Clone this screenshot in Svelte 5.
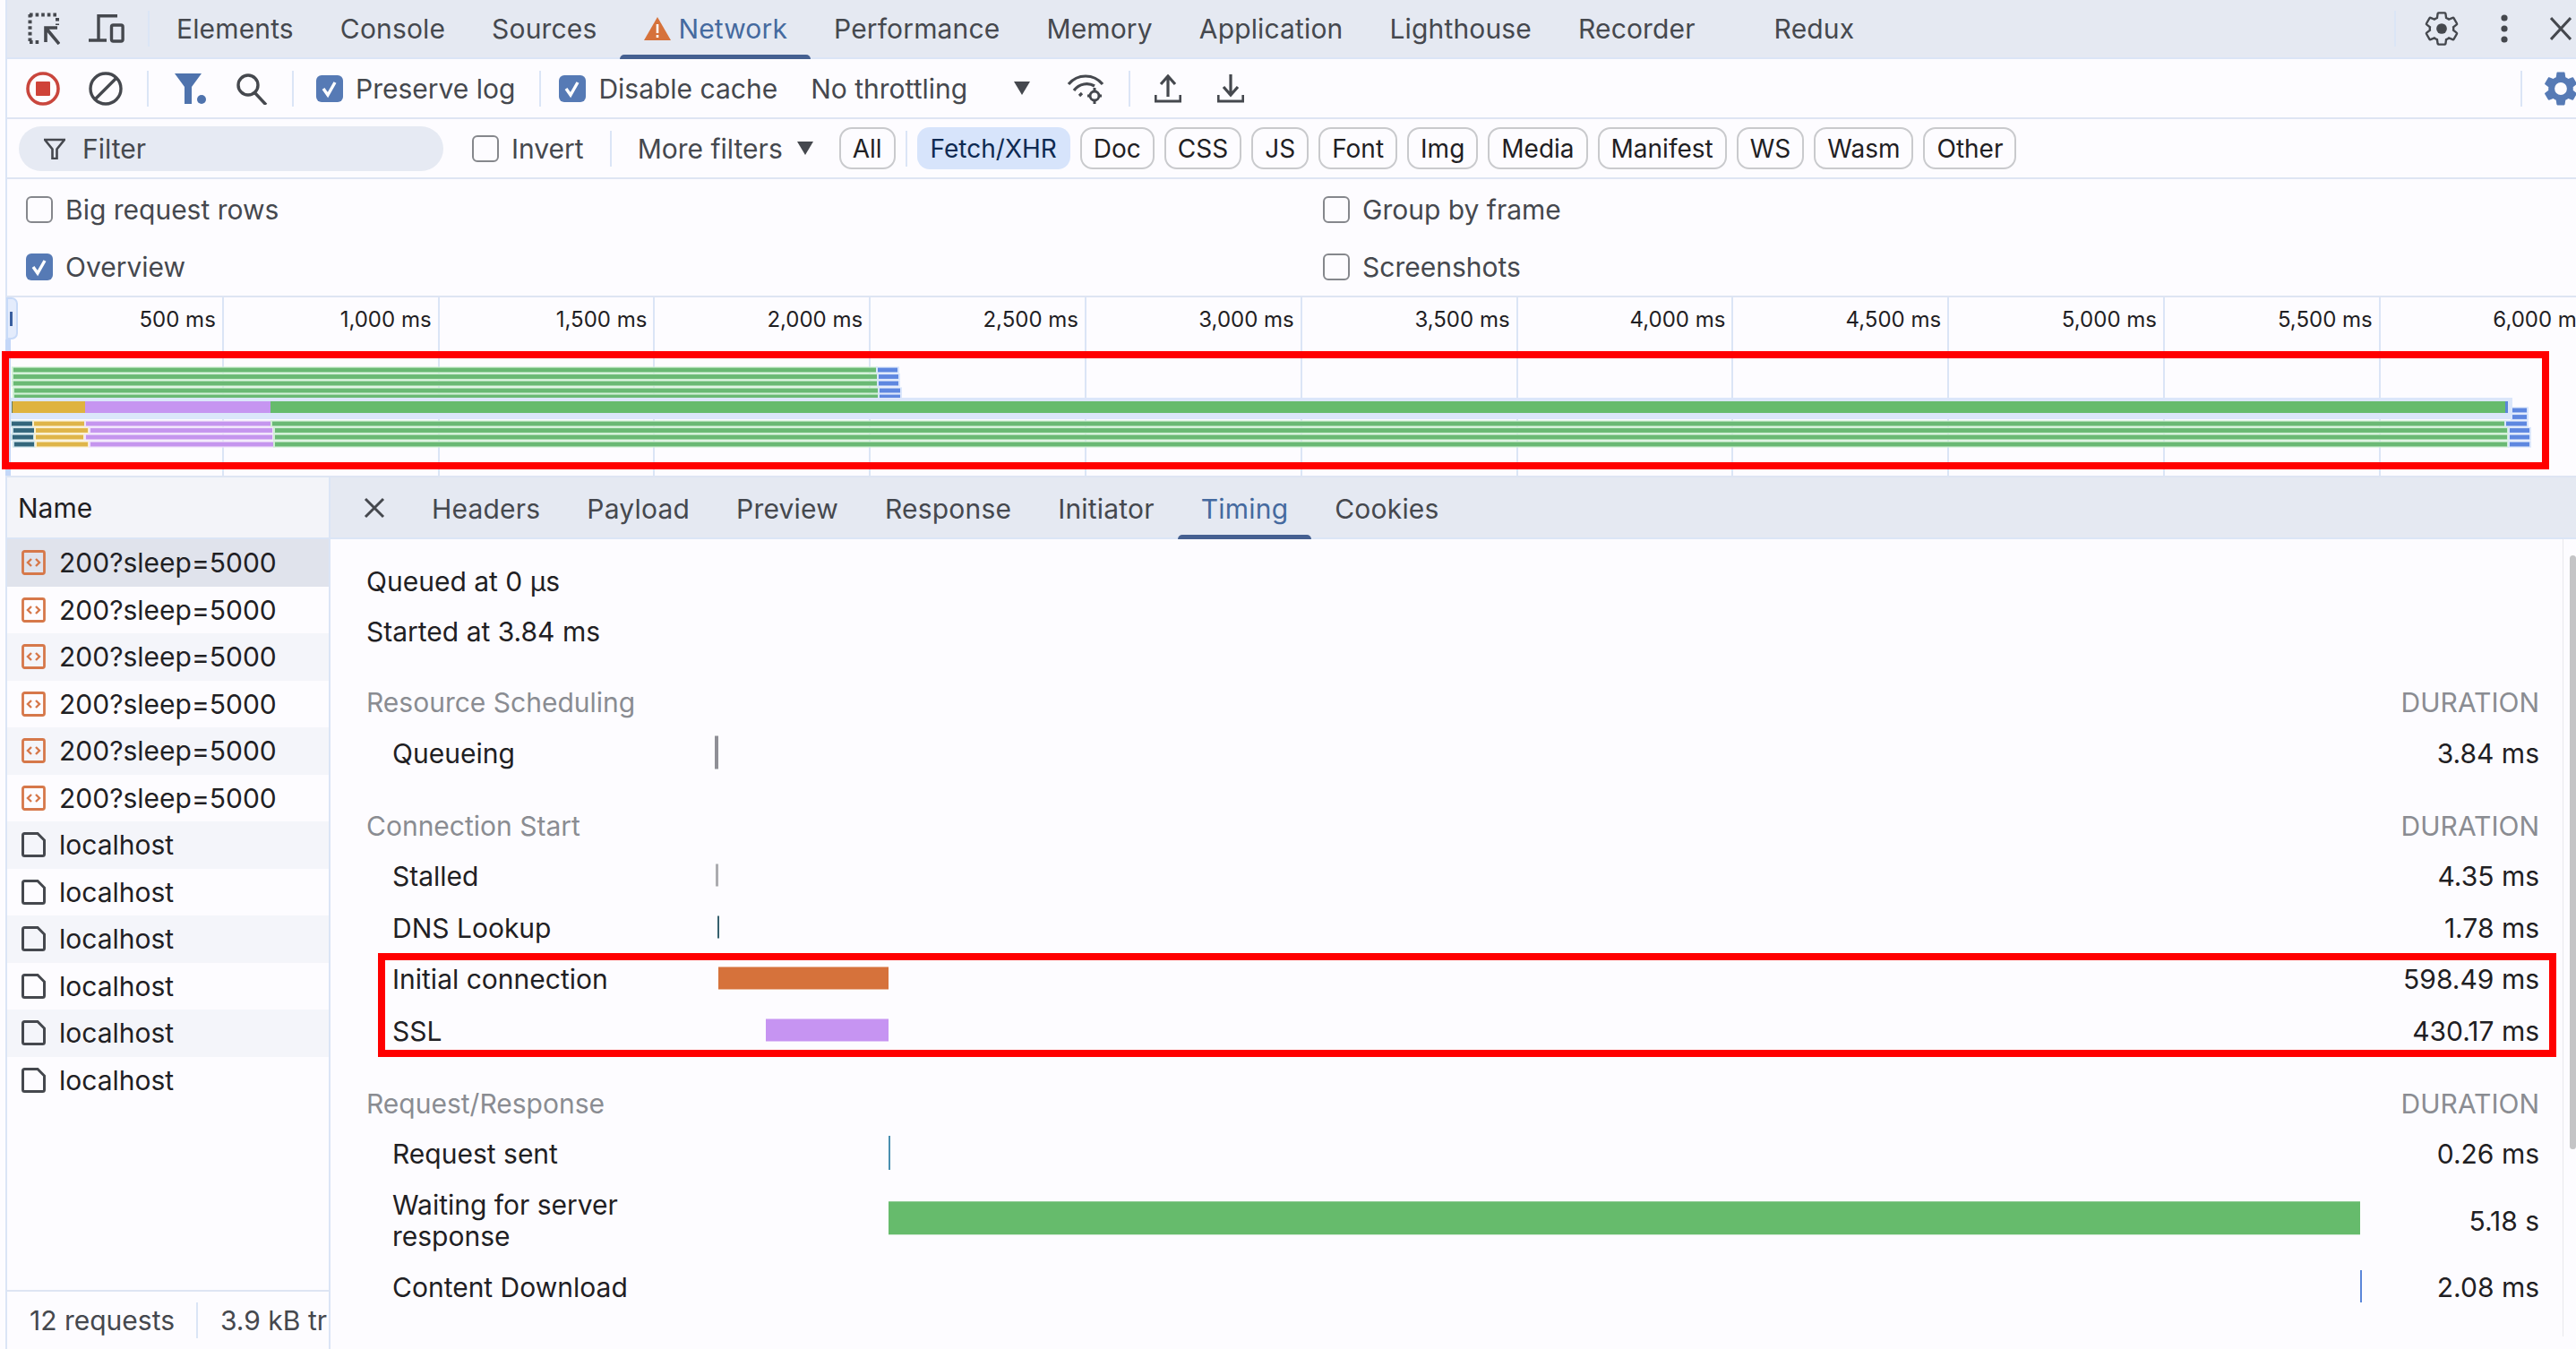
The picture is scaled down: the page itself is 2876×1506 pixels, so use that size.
<script>
const tabs = ['Elements', 'Console', 'Sources', 'Network', 'Performance', 'Memory', 'Application', 'Lighthouse', 'Recorder', 'Redux'];
const chips = ['Fetch/XHR', 'Doc', 'CSS', 'JS', 'Font', 'Img', 'Media', 'Manifest', 'WS', 'Wasm', 'Other'];
const detailTabs = ['Headers', 'Payload', 'Preview', 'Response', 'Initiator', 'Timing', 'Cookies'];
const ticks = ['500 ms', '1,000 ms', '1,500 ms', '2,000 ms', '2,500 ms', '3,000 ms', '3,500 ms', '4,000 ms', '4,500 ms', '5,000 ms', '5,500 ms', '6,000 ms'];
const requests = [...Array(6).fill('200?sleep=5000'), ...Array(6).fill('localhost')];

const colors = {
  g: ['#6ab974', '#cdeed2'],
  b: ['#5e87e0', '#d9e5fb'],
  y: ['#dfb549', '#fbefcc'],
  p: ['#c595ee', '#efe1fb'],
  t: ['#33667c', '#c9e0e8']
};

// overview rows: y centre, then segments [kind, from, to]
const shortRows = [
  [413, [['g', 15, 978], ['b', 980, 1002]]],
  [420.5, [['g', 15, 979], ['b', 981, 1003]]],
  [428, [['g', 15, 979], ['b', 981, 1003]]],
  [436, [['g', 16, 980], ['b', 982, 1005]]],
  [443, [['g', 16, 980], ['b', 982, 1005]]]
];
const longRows = [
  [458, [['b', 2805, 2821]]],
  [465.5, [['b', 2805, 2821]]],
  [473, [['t', 13, 36], ['y', 38, 94], ['p', 96, 302], ['g', 304, 2796], ['b', 2798, 2821]]],
  [480.5, [['t', 15, 38], ['y', 40, 98], ['p', 101, 304], ['g', 307, 2799], ['b', 2802, 2824]]],
  [488, [['t', 14, 37], ['y', 40, 93], ['p', 96, 304], ['g', 307, 2799], ['b', 2802, 2824]]],
  [496, [['t', 16, 38], ['y', 41, 98], ['p', 101, 305], ['g', 307, 2799], ['b', 2802, 2824]]]
];

const sections = [
  {
    title: 'Resource Scheduling',
    rows: [{ label: 'Queueing', value: '3.84 ms', x: 798, w: 4, h: 37, color: '#8f8f96' }]
  },
  {
    title: 'Connection Start',
    rows: [
      { label: 'Stalled', value: '4.35 ms', x: 799, w: 3, h: 25, color: '#ababaf' },
      { label: 'DNS Lookup', value: '1.78 ms', x: 801, w: 2, h: 25, color: '#36606e' },
      { label: 'Initial connection', value: '598.49 ms', x: 802, w: 190, h: 25, color: '#d6723b' },
      { label: 'SSL', value: '430.17 ms', x: 855, w: 137, h: 25, color: '#c694f2' }
    ]
  },
  {
    title: 'Request/Response',
    rows: [
      { label: 'Request sent', value: '0.26 ms', x: 992, w: 2, h: 38, color: '#4a8fb0' },
      { label: 'Waiting for server response', value: '5.18 s', x: 992, w: 1643, h: 37, color: '#66bb6c', tall: true },
      { label: 'Content Download', value: '2.08 ms', x: 2635, w: 2, h: 36, color: '#5b86d9' }
    ]
  }
];

const gearPath = 'M19.14 12.94c.04-.3.06-.61.06-.94 0-.32-.02-.64-.07-.94l2.03-1.58a.49.49 0 0 0 .12-.61l-1.92-3.32a.488.488 0 0 0-.59-.22l-2.39.96c-.5-.38-1.03-.7-1.62-.94l-.36-2.54a.484.484 0 0 0-.48-.41h-3.84c-.24 0-.43.17-.47.41l-.36 2.54c-.59.24-1.13.57-1.62.94l-2.39-.96c-.22-.08-.47 0-.59.22L2.74 8.87c-.12.21-.08.47.12.61l2.03 1.58c-.05.3-.09.63-.09.94s.02.64.07.94l-2.03 1.58a.49.49 0 0 0-.12.61l1.92 3.32c.12.22.37.29.59.22l2.39-.96c.5.38 1.03.7 1.62.94l.36 2.54c.05.24.24.41.48.41h3.84c.24 0 .44-.17.47-.41l.36-2.54c.59-.24 1.13-.56 1.62-.94l2.39.96c.22.08.47 0 .59-.22l1.92-3.32c.12-.22.07-.47-.12-.61l-2.01-1.58z';
</script>

{#snippet checkbox(on)}
  {#if on}
    <span class="box on">
      <svg viewBox="0 0 30 30" width="30" height="30"><path d="M8 15l5 7 8-14" fill="none" stroke="#fff" stroke-width="3.4"/></svg>
    </span>
  {:else}
    <span class="box"></span>
  {/if}
{/snippet}

{#snippet bars(rows)}
  {#each rows as [y, segs]}
    {#each segs as [kind, from, to]}
      <rect x={from - 2} y={y - 3.6} width={to - from + 4} height="7.2" fill={colors[kind][1]} />
      <rect x={from} y={y - 2.4} width={to - from} height="4.8" fill={colors[kind][0]} />
    {/each}
  {/each}
{/snippet}

<div class="app">
  <div class="shell">
    <!-- devtools panel tabs -->
    <header class="tabbar">
      <svg class="ic-inspect" viewBox="0 0 36 36" width="36" height="36" fill="none" stroke="#45484e">
        <path d="M2 2.5H34M2.5 2V32" stroke-width="4" stroke-dasharray="3.6 3"/>
        <path d="M33 6V14M2 33H13" stroke-width="4" stroke-dasharray="3.6 3"/>
        <path d="M20 33V17H33M20 17L35 35" stroke-width="3.6"/>
      </svg>
      <svg class="ic-device" viewBox="0 0 40 32" width="40" height="32" fill="none" stroke="#45484e" stroke-width="3.4">
        <path d="M32 1.7H11V29H0M0 29H20"/>
        <rect x="25.5" y="12" width="12.6" height="18" rx="2"/>
      </svg>
      <span class="vr"></span>
      <nav class="tablist">
        {#each tabs as tab}
          <span class="tab" class:active={tab === 'Network'} class:gap={tab === 'Recorder'}>
            {#if tab === 'Network'}
              <svg viewBox="0 0 32 28" width="32" height="28">
                <path d="M16 1L31 27H1z" fill="#d6723b"/>
                <path d="M16 9v10M16 21v3" stroke="#fff" stroke-width="2.6"/>
              </svg>
            {/if}
            {tab}
          </span>
        {/each}
      </nav>
      <div class="tabbar-right">
        <span class="vr"></span>
        <svg class="ic-gear" viewBox="0 0 24 24" width="44" height="44">
          <path d={gearPath} fill="none" stroke="#45484e" stroke-width="1.3"/>
          <circle cx="12" cy="12" r="3.2" fill="#45484e"/>
        </svg>
        <svg class="ic-dots" viewBox="0 0 10 32" width="10" height="32" fill="#45484e">
          <circle cx="5" cy="4" r="3.6"/><circle cx="5" cy="16" r="3.6"/><circle cx="5" cy="28" r="3.6"/>
        </svg>
        <svg class="ic-close" viewBox="0 0 24 26" width="24" height="26" fill="none" stroke="#45484e" stroke-width="3">
          <path d="M1 1L23 25M23 1L1 25"/>
        </svg>
      </div>
    </header>

    <!-- network toolbar -->
    <div class="toolbar">
      <svg class="ic-record" viewBox="0 0 38 38" width="38" height="38">
        <circle cx="19" cy="19" r="17" fill="none" stroke="#c9463d" stroke-width="3.6"/>
        <rect x="11" y="11" width="16" height="16" rx="1" fill="#cf4339"/>
      </svg>
      <svg class="ic-clear" viewBox="0 0 38 38" width="38" height="38" fill="none" stroke="#45484e" stroke-width="3.4">
        <circle cx="19" cy="19" r="17"/><path d="M7 31L31 7"/>
      </svg>
      <span class="vr"></span>
      <svg class="ic-filter" viewBox="0 0 36 34" width="36" height="34" fill="#4f73ad">
        <path d="M0 0H30L19 15V34H11V15z"/><circle cx="30" cy="29" r="5"/>
      </svg>
      <svg class="ic-search" viewBox="0 0 36 36" width="36" height="36" fill="none" stroke="#45484e" stroke-width="3.4">
        <circle cx="14" cy="14" r="11"/><path d="M21 22L34 36"/>
      </svg>
      <span class="vr"></span>
      <label class="opt preserve">{@render checkbox(true)}Preserve log</label>
      <span class="vr"></span>
      <label class="opt cache">{@render checkbox(true)}Disable cache</label>
      <span class="throttle">No throttling</span>
      <span class="tri"></span>
      <svg class="ic-wifi" viewBox="0 0 42 36" width="42" height="36" fill="none" stroke="#45484e" stroke-width="3.2">
        <path d="M2 13C12 1 30 1 40 13"/>
        <path d="M8 20C14 12 24 11 31 15"/>
        <path d="M14 26L17 23"/>
        <circle cx="31" cy="26" r="5" stroke-width="3"/>
        <path d="M31 17v3M31 32v3M23 26h3M36 26h3" stroke-width="3"/>
      </svg>
      <span class="vr"></span>
      <svg class="ic-up" viewBox="0 0 30 32" width="30" height="32" fill="none" stroke="#45484e" stroke-width="3.2">
        <path d="M15 25V2M7 11L15 2l8 9M1 23v7h28v-7"/>
      </svg>
      <svg class="ic-down" viewBox="0 0 30 32" width="30" height="32" fill="none" stroke="#45484e" stroke-width="3.2">
        <path d="M15 0V22M7 14l8 9 8-9M1 23v7h28v-7"/>
      </svg>
      <span class="vr end"></span>
      <svg class="ic-gear-on" viewBox="0 0 24 24" width="46" height="46">
        <path d={gearPath} fill="#567ab5"/>
        <circle cx="12" cy="12" r="3.6" fill="#fdfcff"/>
      </svg>
    </div>

    <!-- filter row -->
    <div class="filterbar">
      <div class="search">
        <svg viewBox="0 0 24 24" width="24" height="24" fill="none" stroke="#45484e" stroke-width="2.6">
          <path d="M1 2H23L14.5 12.5V23H9.500V12.500z"/>
        </svg>
        <span>Filter</span>
      </div>
      <label class="opt invert">{@render checkbox(false)}Invert</label>
      <span class="vr"></span>
      <span class="more">More filters</span>
      <span class="tri small"></span>
      <span class="chip">All</span>
      <span class="vr chipsep"></span>
      {#each chips as chip}
        <span class="chip" class:selected={chip === 'Fetch/XHR'}>{chip}</span>
      {/each}
    </div>

    <!-- settings pane -->
    <div class="settings">
      <label class="opt">{@render checkbox(false)}Big request rows</label>
      <label class="opt">{@render checkbox(false)}Group by frame</label>
      <label class="opt">{@render checkbox(true)}Overview</label>
      <label class="opt">{@render checkbox(false)}Screenshots</label>
    </div>

    <!-- overview timeline -->
    <div class="overview">
      <div class="ruler">
        {#each ticks as tick}
          <div class="cell"><span>{tick}</span></div>
        {/each}
      </div>
      <svg class="graph" viewBox="0 332 2876 200" width="2876" height="200">
        {@render bars(shortRows)}
        <rect x="8" y="444" width="2797" height="24" fill="#dbe6fa"/>
        <rect x="13" y="448" width="2" height="13" fill="#5d7c6a"/>
        <rect x="14" y="448" width="81" height="13" fill="#dfb33f"/>
        <rect x="95" y="448" width="207" height="13" fill="#c695f1"/>
        <rect x="302" y="448" width="2495" height="13" fill="#66bb6c"/>
        <rect x="2797" y="448" width="3" height="13" fill="#5b86d9"/>
        {@render bars(longRows)}
      </svg>
      <div class="stripe"></div>
      <div class="handle"><i></i></div>
    </div>

    <!-- requests + details -->
    <div class="split">
      <aside class="requests">
        <div class="name-head">Name</div>
        <div class="list">
          {#each requests as req, i}
            <div class="req" class:sel={i === 0} class:alt={i > 0 && i % 2 === 0}>
              {#if req === 'localhost'}
                <svg viewBox="0 0 27 28" width="27" height="28" fill="none" stroke="#45484e" stroke-width="3">
                  <path d="M18 1.500H3.500Q1.500 1.500 1.500 3.500V24.500Q1.500 26.500 3.500 26.500H23.500Q25.500 26.500 25.500 24.500V9z"/>
                </svg>
              {:else}
                <svg viewBox="0 0 27 28" width="27" height="28" fill="none" stroke="#d6784a">
                  <rect x="1.500" y="1.500" width="24" height="25" rx="2" stroke-width="2.800"/>
                  <path d="M11 10l-4 4 4 4M16 10l4 4-4 4" stroke-width="2.400"/>
                </svg>
              {/if}
              <span>{req}</span>
            </div>
          {/each}
        </div>
        <footer class="status">
          <span>12 requests</span>
          <span class="vr status-sep"></span>
          <span class="clip">3.9 kB tr</span>
        </footer>
      </aside>

      <section class="details">
        <div class="detail-tabs">
          <svg class="detail-close" viewBox="0 0 24 24" width="24" height="24" fill="none" stroke="#45484e" stroke-width="3">
            <path d="M2 2L22 22M22 2L2 22"/>
          </svg>
          {#each detailTabs as tab}
            <span class="dtab" class:active={tab === 'Timing'}>{tab}</span>
          {/each}
        </div>
        <div class="timing">
          <p class="meta">Queued at 0 µs</p>
          <p class="meta">Started at 3.84 ms</p>
          {#each sections as section}
            <div class="sec-head"><span>{section.title}</span><span>DURATION</span></div>
            {#each section.rows as row}
              <div class="row" class:tall={row.tall}>
                <span class="label">{row.label}</span>
                <div class="track">
                  <i style="left:{row.x - 800}px;width:{row.w}px;height:{row.h}px;background:{row.color}"></i>
                </div>
                <span class="value">{row.value}</span>
              </div>
            {/each}
          {/each}
          <div class="scrollbar"></div>
        </div>
      </section>
    </div>
  </div>

  <div class="frame frame-overview"></div>
  <div class="frame frame-timing"></div>
</div>

<style>
  :global(body) {
    margin: 0;
    background: #fdfcff;
  }
  .app {
    position: relative;
    width: 2876px;
    height: 1506px;
    overflow: hidden;
    box-sizing: border-box;
    padding-left: 6px;
    font-family: Inter, "Liberation Sans", sans-serif;
    font-size: 30px;
    color: #1f2023;
    white-space: nowrap;
  }
  .shell {
    height: 100%;
    border-left: 2px solid #dbe5f6;
    display: flex;
    flex-direction: column;
  }
  svg {
    flex: none;
    display: block;
  }
  .vr {
    flex: none;
    width: 2px;
    height: 40px;
    background: #dbe5f6;
  }

  /* tab bar */
  .tabbar {
    height: 64px;
    flex: none;
    display: flex;
    align-items: center;
    padding-left: 23px;
    background: #e5e9f2;
    border-bottom: 2px solid #dbe5f6;
    color: #45484e;
  }
  .ic-device {
    margin-left: 32px;
  }
  .tabbar > .vr {
    margin-left: 26px;
  }
  .tablist {
    display: flex;
    height: 100%;
    margin-left: 4px;
  }
  .tab {
    position: relative;
    display: flex;
    align-items: center;
    gap: 7px;
    padding: 0 26px;
    height: 100%;
    letter-spacing: 0.15px;
  }
  .tab.gap {
    margin-right: 36px;
  }
  .tab.active {
    color: #456a9f;
  }
  .tab.active::after {
    content: "";
    position: absolute;
    left: 0;
    right: 0;
    bottom: -2px;
    height: 5px;
    background: #456091;
    border-radius: 5px 5px 0 0;
  }
  .tabbar-right {
    margin-left: auto;
    display: flex;
    align-items: center;
    height: 100%;
  }
  .ic-gear {
    margin-left: 29px;
  }
  .ic-dots {
    margin-left: 43px;
  }
  .ic-close {
    margin: 0 5px 0 46px;
  }

  /* toolbar */
  .toolbar {
    height: 65px;
    flex: none;
    display: flex;
    align-items: center;
    padding-left: 21px;
    border-bottom: 2px solid #dee5f3;
    color: #45484e;
  }
  .ic-clear {
    margin-left: 32px;
  }
  .toolbar > .vr {
    margin-left: 27px;
  }
  .ic-filter {
    margin-left: 29px;
  }
  .ic-search {
    margin-left: 32px;
  }
  .opt {
    display: flex;
    align-items: center;
    gap: 14px;
    color: #45484e;
  }
  .preserve {
    margin-left: 25px;
  }
  .cache {
    margin-left: 20px;
  }
  .throttle {
    margin-left: 37px;
  }
  .tri {
    flex: none;
    width: 0;
    height: 0;
    margin-left: 52px;
    border-left: 9.500px solid transparent;
    border-right: 9.500px solid transparent;
    border-top: 15px solid #45484e;
  }
  .ic-wifi {
    margin-left: 41px;
  }
  .ic-up {
    margin-left: 27px;
  }
  .ic-down {
    margin-left: 40px;
  }
  .toolbar > .vr.end {
    margin-left: auto;
  }
  .ic-gear-on {
    margin: 0 -6px 0 20px;
  }
  .box {
    flex: none;
    box-sizing: border-box;
    width: 30px;
    height: 30px;
    border: 2px solid #85878c;
    border-radius: 6px;
    background: #fdfcff;
  }
  .box.on {
    border: 0;
    background: #567ab5;
  }

  /* filter bar */
  .filterbar {
    height: 65px;
    flex: none;
    display: flex;
    align-items: center;
    padding-left: 13px;
    border-bottom: 2px solid #dee5f3;
    color: #45484e;
  }
  .search {
    width: 474px;
    height: 50px;
    display: flex;
    align-items: center;
    gap: 19px;
    padding-left: 28px;
    box-sizing: border-box;
    border-radius: 25px;
    background: #e6eaf3;
  }
  .invert {
    margin-left: 32px;
  }
  .filterbar > .vr {
    margin-left: 29px;
  }
  .more {
    margin-left: 29px;
  }
  .tri.small {
    margin-left: 16px;
  }
  .chip {
    flex: none;
    box-sizing: border-box;
    height: 47px;
    line-height: 45px;
    padding: 0 13px;
    margin-left: 11px;
    border: 2px solid #c9cacd;
    border-radius: 14px;
    font-size: 28px;
    color: #1f2023;
  }
  .tri.small + .chip {
    margin-left: 29px;
  }
  .filterbar > .chipsep {
    margin-left: 11px;
  }
  .chip.selected {
    margin-left: 11px;
    border-color: transparent;
    background: #d7e4fb;
    color: #0e2a52;
  }

  /* settings */
  .settings {
    height: 132px;
    flex: none;
    box-sizing: border-box;
    display: grid;
    grid-template-columns: 1448px 1fr;
    grid-auto-rows: 64px;
    align-items: center;
    padding: 2px 0 0 21px;
    border-bottom: 2px solid #dee5f3;
  }

  /* overview */
  .overview {
    position: relative;
    height: 201px;
    flex: none;
    border-bottom: 2px solid #dee5f3;
    box-sizing: border-box;
  }
  .ruler {
    display: flex;
    height: 100%;
    padding-left: 1px;
    font-size: 24px;
    color: #1f2023;
  }
  .cell {
    flex: none;
    width: 240.800px;
    box-sizing: border-box;
    border-right: 2px solid #dbe5f6;
    padding: 10px 7px 0 0;
    text-align: right;
  }
  .graph {
    position: absolute;
    left: -8px;
    top: 0;
  }
  .stripe {
    position: absolute;
    left: -2px;
    top: 47px;
    bottom: 0;
    width: 6px;
    background: #c4d7f8;
  }
  .handle {
    position: absolute;
    left: -1px;
    top: 0;
    width: 13px;
    height: 47px;
    box-sizing: border-box;
    border: 2px solid #c8daf8;
    border-radius: 0 7px 7px 0;
    background: #e4ecfc;
  }
  .handle i {
    position: absolute;
    left: 2px;
    top: 14px;
    width: 3px;
    height: 16px;
    background: #3a5f9f;
  }

  /* split */
  .split {
    flex: 1;
    min-height: 0;
    display: flex;
  }
  .requests {
    width: 361px;
    flex: none;
    box-sizing: border-box;
    display: flex;
    flex-direction: column;
    border-right: 2px solid #dbe5f6;
  }
  .name-head {
    height: 67px;
    flex: none;
    line-height: 69px;
    padding-left: 12px;
    background: #f3f4f9;
    border-bottom: 2px solid #dbe5f6;
  }
  .list {
    flex: 1;
  }
  .req {
    height: 52.500px;
    display: flex;
    align-items: center;
    gap: 15px;
    padding-left: 16px;
  }
  .req.alt {
    background: #f4f5fa;
  }
  .req.sel {
    background: #e0e3ec;
  }
  .status {
    height: 64px;
    flex: none;
    display: flex;
    align-items: center;
    padding-left: 25px;
    border-top: 2px solid #dee5f3;
    color: #45484e;
    overflow: hidden;
  }
  .status-sep {
    margin: 0 25px 0 24px;
  }
  .details {
    flex: 1;
    min-width: 0;
    display: flex;
    flex-direction: column;
  }
  .detail-tabs {
    height: 67px;
    flex: none;
    display: flex;
    align-items: center;
    background: #e5e9f2;
    border-bottom: 2px solid #dbe5f6;
    color: #45484e;
  }
  .detail-close {
    margin: 0 26px 0 37px;
  }
  .dtab {
    position: relative;
    height: 100%;
    box-sizing: border-box;
    display: flex;
    align-items: center;
    padding: 2px 26px 0;
    letter-spacing: 0.2px;
  }
  .dtab.active {
    color: #456a9f;
  }
  .dtab.active::after {
    content: "";
    position: absolute;
    left: 0;
    right: 0;
    bottom: -2px;
    height: 5px;
    background: #456091;
    border-radius: 5px 5px 0 0;
  }
  .timing {
    position: relative;
    flex: 1;
    padding: 18px 41px 0 40px;
  }
  .meta {
    margin: 0;
    height: 55.500px;
    line-height: 58px;
  }
  .sec-head {
    display: flex;
    justify-content: space-between;
    height: 56px;
    line-height: 58px;
    margin-top: 24px;
    color: #8a8c92;
  }
  .row {
    display: grid;
    grid-template-columns: 362px 1835px 1fr;
    align-items: center;
    height: 57.500px;
    padding-left: 29px;
  }
  .row.tall {
    height: 91px;
  }
  .row.tall .label {
    white-space: normal;
    line-height: 35px;
    padding-right: 40px;
  }
  .label,
  .value {
    padding-top: 2px;
  }
  .track {
    position: relative;
    height: 100%;
  }
  .track i {
    position: absolute;
    top: 50%;
    transform: translateY(-50%);
  }
  .row.tall .track i {
    transform: translateY(-56%);
  }
  .value {
    text-align: right;
  }
  .scrollbar {
    position: absolute;
    top: 18px;
    right: 0;
    width: 7px;
    height: 663px;
    border-radius: 4px;
    background: #c4c4c6;
  }
  .details .timing::after {
    content: "";
    position: absolute;
    top: 0;
    right: 14px;
    height: 890px;
    width: 1px;
    background: #e8e8ec;
  }

  .frame {
    position: absolute;
    box-sizing: border-box;
    border: 8px solid #ff0000;
    pointer-events: none;
  }
  .frame-overview {
    left: 2px;
    top: 392px;
    width: 2844px;
    height: 132px;
  }
  .frame-timing {
    left: 422px;
    top: 1064px;
    width: 2432px;
    height: 116px;
  }
</style>
